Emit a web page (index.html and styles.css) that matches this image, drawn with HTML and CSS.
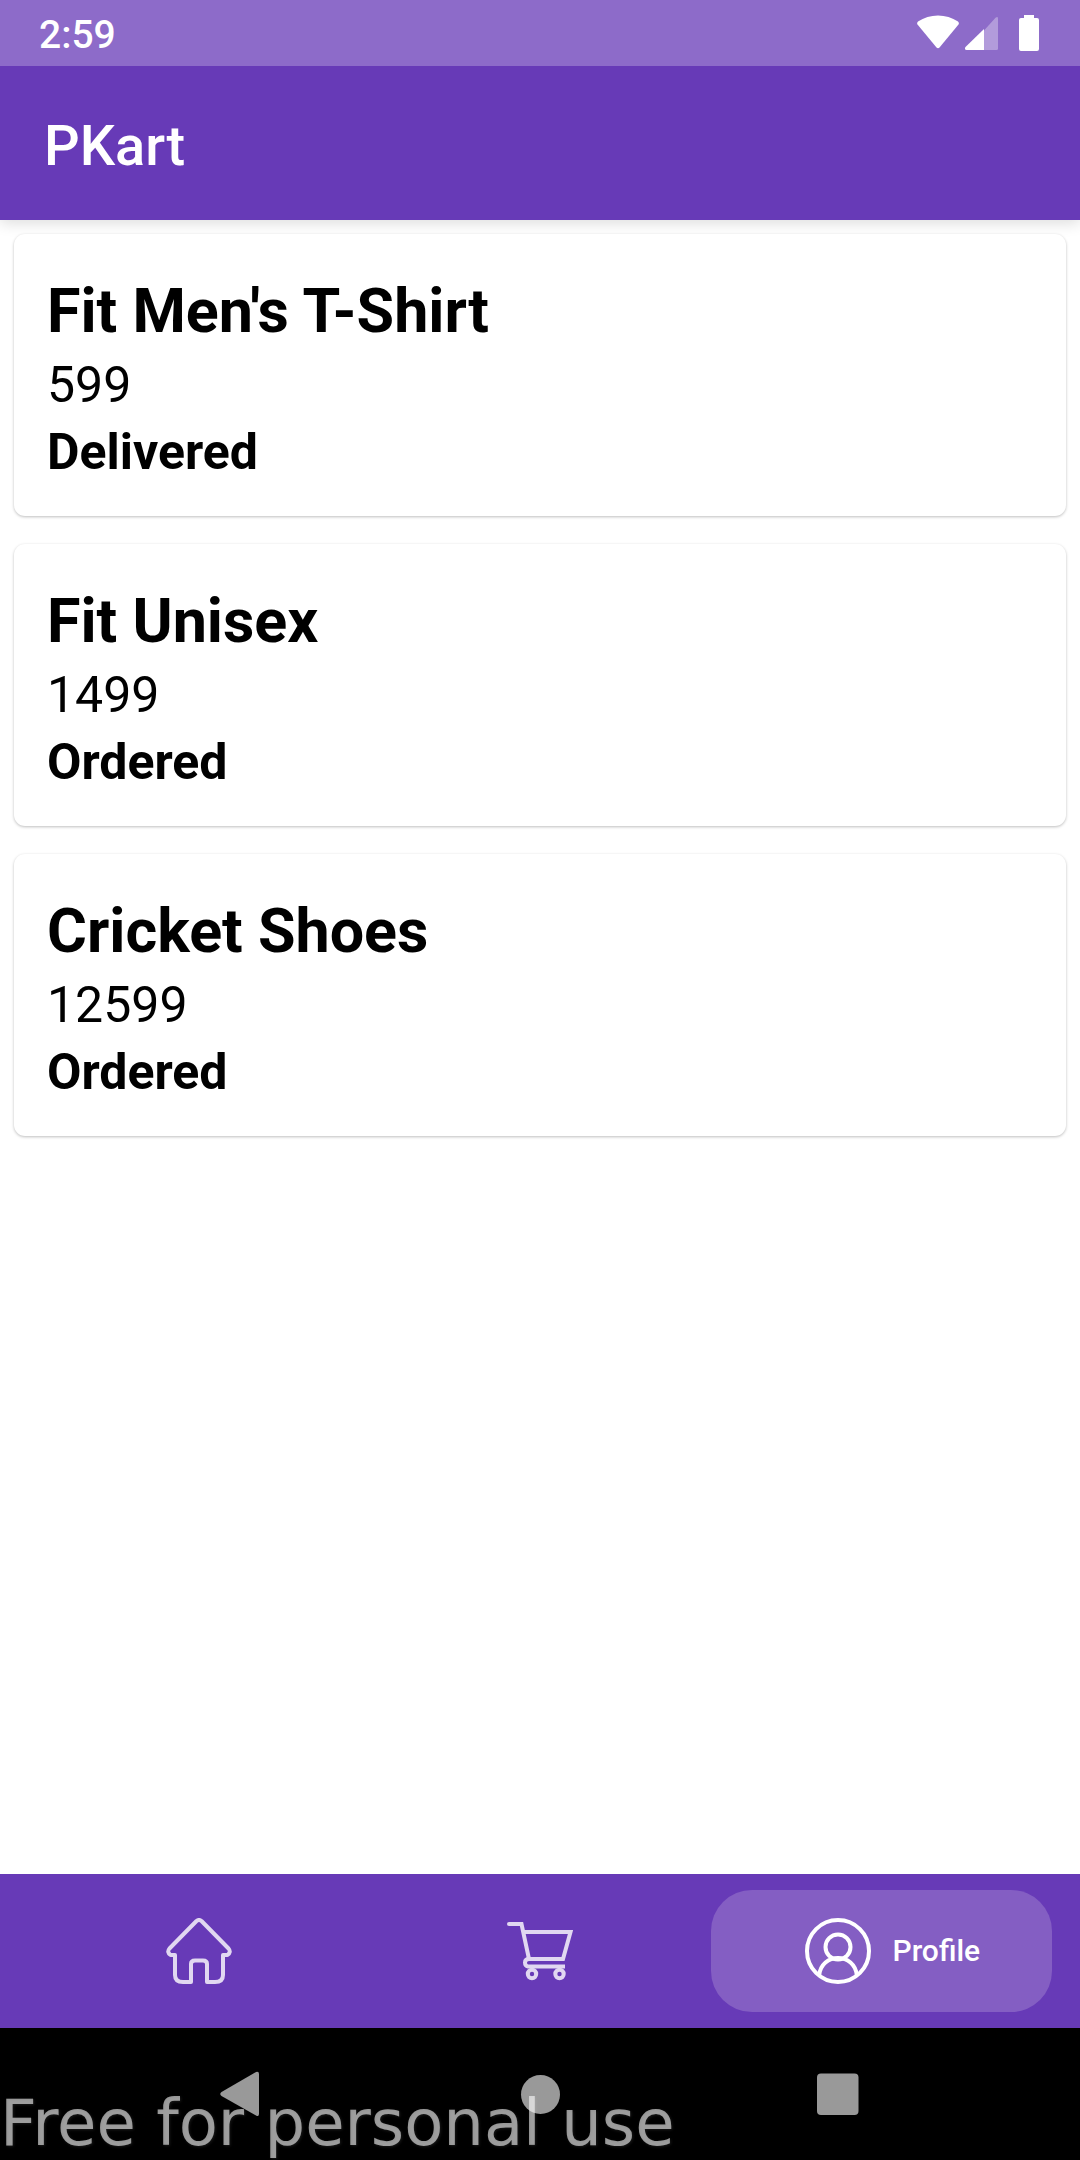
FILE: index.html
```html
<!DOCTYPE html>
<html lang="en">
<head>
<meta charset="utf-8">
<meta name="viewport" content="width=device-width">
<title>PKart</title>
<link rel="stylesheet" href="styles.css">
</head>
<body>
<div class="status-bar">
  <span class="clock">2:59</span>
  <div class="status-icons">
    <svg class="wifi" width="42" height="36" viewBox="0 0 42 36" aria-hidden="true"><path d="M.5 9.500Q-.5 8 1 6.500Q10 .5 21 .5T41 6.500Q42.500 8 41.500 9.500L22.500 32.500Q21 34 19.500 32.500Z"/></svg>
    <svg width="34" height="36" viewBox="0 0 34 36" aria-hidden="true"><path opacity=".33" d="M19 15.500 30.500 2.800Q33 .8 33 3.500V33.500Q33 35 31.500 35H19Z"/><path d="M19 14V35H1.500Q-1 34.500.5 32Z"/></svg>
    <svg class="battery" width="20" height="36" viewBox="0 0 20 36" aria-hidden="true"><path d="M5 0H15V3H18Q20 3 20 5V34Q20 36 18 36H2Q0 36 0 34V5Q0 3 2 3H5Z"/></svg>
  </div>
</div>
<header class="app-bar"><h1 class="app-title">PKart</h1></header>
<main class="orders">
  <article class="order">
    <h2 class="order-name">Fit Men's T-Shirt</h2>
    <p class="order-price">599</p>
    <p class="order-status">Delivered</p>
  </article>
  <article class="order">
    <h2 class="order-name">Fit Unisex</h2>
    <p class="order-price">1499</p>
    <p class="order-status">Ordered</p>
  </article>
  <article class="order">
    <h2 class="order-name">Cricket Shoes</h2>
    <p class="order-price">12599</p>
    <p class="order-status">Ordered</p>
  </article>
</main>
<nav class="tabs">
  <a class="tab" href="#home" aria-label="Home">
    <svg class="tab-icon" width="66" height="66" viewBox="0 0 66 66" aria-hidden="true"><path stroke-linejoin="round" d="M30.500 3Q33 1 35.500 3L62.500 30.500Q65.500 34 61.500 37H57V57Q57 64 49 64H41V46Q41 42.500 37 42.500H29Q25 42.500 25 46V64H17Q9 64 9 57V37H4.500Q.5 34 3.500 30.500Z"/></svg>
  </a>
  <a class="tab" href="#cart" aria-label="Cart">
    <svg class="tab-icon" width="66" height="66" viewBox="0 0 66 66" aria-hidden="true"><path d="M2 6H14.500L22 41H56L63.500 14H16.500"/><path stroke-linecap="round" d="M2 6H4"/><path d="M58 48.500H21Q18 48 18 44.500T22 41"/><circle cx="25" cy="56" r="4.200"/><circle cx="52.500" cy="56" r="4.200"/></svg>
  </a>
  <a class="tab tab-active" href="#profile" aria-current="page">
    <svg class="tab-icon" width="66" height="66" viewBox="0 0 66 66" aria-hidden="true"><circle cx="33" cy="33" r="31"/><circle cx="33" cy="29" r="12.500"/><path d="M14 58C16 34 50 34 52 58"/></svg>
    <span class="tab-label">Profile</span>
  </a>
</nav>
<footer class="system-nav">
  <button class="system-button" type="button" aria-label="Back"><svg width="44" height="46" viewBox="0 0 44 46" aria-hidden="true"><path d="M1.500 21 36 1Q39 0 39 3V43Q39 46 36 44.500L1.500 25Q-1 23 1.500 21Z"/></svg></button>
  <button class="system-button" type="button" aria-label="Home"><svg width="40" height="40" viewBox="0 0 40 40" aria-hidden="true"><circle cx="20.500" cy="20.500" r="19.500"/></svg></button>
  <button class="system-button" type="button" aria-label="Recent apps"><svg width="42" height="42" viewBox="0 0 42 42" aria-hidden="true"><rect y=".5" width="41.500" height="41.500" rx="4"/></svg></button>
  <span class="watermark">Free for personal use</span>
</footer>
</body>
</html>
```
FILE: styles.css
```css
* {
  box-sizing: border-box;
}

body {
  margin: 0;
  min-height: 100vh;
  display: flex;
  flex-direction: column;
  background: #fff;
  color: #000;
  font-family: Roboto, "Noto Sans", sans-serif;
}

h1,
h2,
p {
  margin: 0;
}

svg {
  display: block;
}

.status-bar {
  position: relative;
  z-index: 1;
  height: 66px;
  padding: 0 41px 0 39px;
  display: flex;
  align-items: center;
  justify-content: space-between;
  background: #8d6bc9;
  color: #fff;
}

.clock {
  padding-top: 3px;
  font-size: 39px;
  font-weight: 500;
  line-height: 46px;
}

.status-icons {
  display: flex;
  gap: 6px;
  fill: currentColor;
}

.battery {
  margin-left: 14px;
}

.app-bar {
  height: 154px;
  padding: 5px 44px 0;
  display: flex;
  align-items: center;
  background: #673ab7;
  color: #fff;
  box-shadow: 0 3px 14px rgba(0, 0, 0, .14);
}

.app-title {
  font-size: 56px;
  font-weight: 500;
  line-height: 64px;
}

.orders {
  flex: 1;
  padding: 14px;
  display: flex;
  flex-direction: column;
  gap: 28px;
}

.order {
  padding: 42px 33px 35px;
  display: flex;
  flex-direction: column;
  gap: 9px;
  border-radius: 11px;
  background: #fff;
  box-shadow: 0 1px 3px rgba(0, 0, 0, .26);
}

.order-name {
  font-size: 61px;
  font-weight: 700;
  line-height: 71px;
}

.order-price,
.order-status {
  font-size: 50px;
  line-height: 58px;
}

.order-status {
  font-weight: 700;
}

.tabs {
  height: 154px;
  padding: 16px 28px;
  display: grid;
  grid-template-columns: repeat(3, 1fr);
  background: #673ab7;
}

.tab {
  display: flex;
  align-items: center;
  justify-content: center;
  gap: 22px;
  border-radius: 41px;
  color: #e1d8f1;
  text-decoration: none;
}

.tab-active {
  padding-left: 22px;
  background: #845ec3;
  color: #fff;
}

.tab-icon {
  fill: none;
  stroke: currentColor;
  stroke-width: 4;
}

.tab-label {
  font-size: 30px;
  font-weight: 500;
  line-height: 36px;
}

.system-nav {
  position: relative;
  height: 132px;
  padding: 0 93px;
  display: grid;
  grid-template-columns: repeat(3, 1fr);
  background: #000;
}

.system-button {
  padding: 0;
  border: 0;
  display: flex;
  align-items: center;
  justify-content: center;
  background: none;
  fill: #999;
}

.watermark {
  position: absolute;
  left: 0;
  bottom: 0;
  color: rgba(255, 255, 255, .58);
  font-family: "DejaVu Sans", sans-serif;
  font-size: 64px;
  white-space: nowrap;
  text-shadow: 1px 1px 3px rgba(255, 255, 255, .1);
  pointer-events: none;
}
```
